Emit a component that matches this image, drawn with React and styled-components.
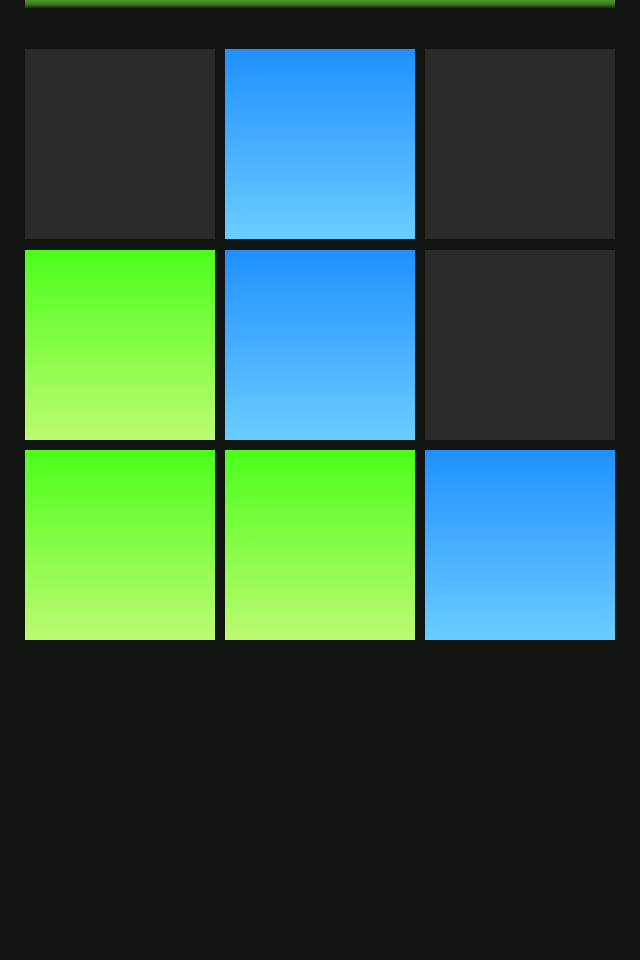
import React from "react";
import styled, { createGlobalStyle } from "styled-components";

const Global = createGlobalStyle`
  html, body { margin: 0; padding: 0; background: #121411; }
  body { font-family: "Liberation Sans", Arial, sans-serif; }
`;

const Page = styled.div`
  width: 640px;
  height: 960px;
  background: #121411;
  padding: 0 25px;
  box-sizing: border-box;
`;

const TopBar = styled.div`
  height: 8px;
  background: linear-gradient(to bottom, #4c9a2a 0%, #3f7a25 50%, #1c2a17 100%);
`;

const Board = styled.div`
  display: grid;
  grid-template-columns: repeat(3, 190px);
  grid-auto-rows: 190px;
  column-gap: 10px;
  row-gap: 10.5px;
  padding-top: 41px;
`;

const gradients = {
  empty: "#2a2a2a",
  blue: "linear-gradient(to bottom, #2190ff 0%, #6bcdff 100%)",
  green: "linear-gradient(to bottom, #4cff1c 0%, #bdfa72 100%)",
};

const Tile = styled.div`
  background: ${(p) => gradients[p.$kind]};
`;

const cells = [
  "empty", "blue", "empty",
  "green", "blue", "empty",
  "green", "green", "blue",
];

export default function App() {
  return (
    <>
      <Global />
      <Page>
        <TopBar />
        <Board>
          {cells.map((k, i) => (
            <Tile key={i} $kind={k} />
          ))}
        </Board>
      </Page>
    </>
  );
}
